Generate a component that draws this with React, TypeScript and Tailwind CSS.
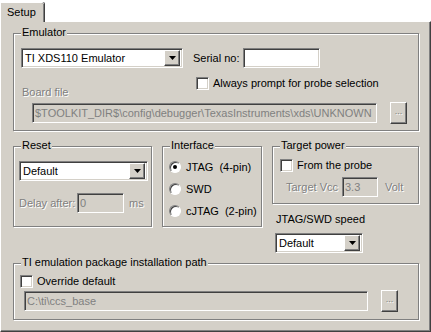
import type { ReactNode } from "react";

const sunken =
  "border border-t-[#808080] border-l-[#808080] border-b-white border-r-white shadow-[inset_1px_1px_0_#404040,inset_-1px_-1px_0_#d4d0c8]";
const raised =
  "border border-t-white border-l-white border-b-[#404040] border-r-[#404040] shadow-[inset_-1px_-1px_0_#808080] bg-[#d4d0c8]";
const dim = "text-[#808080] [text-shadow:1px_1px_0_#fff]";

function Group({ label, className, children }: { label: string; className: string; children: ReactNode }) {
  return (
    <div
      className={`relative border border-[#808080] shadow-[inset_1px_1px_0_#fff,1px_1px_0_#fff] ${className}`}
    >
      <span className="absolute -top-[8px] left-[7px] bg-[#d4d0c8] px-[1px] leading-[13px] text-black">
        {label}
      </span>
      {children}
    </div>
  );
}

function Arrow() {
  return (
    <svg width="7" height="4" viewBox="0 0 7 4">
      <path d="M0 0h7L3.5 4z" fill="#000" />
    </svg>
  );
}

function Combo({ text, width }: { text: string; width: string }) {
  return (
    <div className={`${sunken} ${width} flex h-[20px] items-center bg-white p-[2px]`}>
      <span className="flex-1 pl-[1px] leading-[13px]">{text}</span>
      <div className={`${raised} flex h-[16px] w-[16px] items-center justify-center`}>
        <Arrow />
      </div>
    </div>
  );
}

function Field({ text, width, disabled }: { text: string; width: string; disabled?: boolean }) {
  return (
    <div
      className={`${sunken} ${width} flex h-[20px] items-center overflow-hidden whitespace-nowrap px-[2px] ${
        disabled ? "bg-[#d4d0c8] text-[#808080]" : "bg-white"
      }`}
    >
      {text}
    </div>
  );
}

function Check() {
  return <div className={`${sunken} h-[13px] w-[13px] shrink-0 bg-white`} />;
}

function Radio({ on, label }: { on?: boolean; label: string }) {
  return (
    <div className="flex h-[12px] items-center">
      <div className="flex h-[12px] w-[12px] items-center justify-center rounded-full border border-t-[#808080] border-l-[#808080] border-b-white border-r-white bg-white shadow-[inset_1px_1px_0_#404040]">
        {on && <div className="h-[4px] w-[4px] rounded-full bg-black" />}
      </div>
      <span className="ml-[5px] whitespace-pre">{label}</span>
    </div>
  );
}

function Dots() {
  return (
    <div className={`${raised} flex h-[22px] w-[17px] items-center justify-center pb-[3px] text-[9px] ${dim}`}>
      ...
    </div>
  );
}

export default function App() {
  return (
    <div className="h-[332px] w-[431px] bg-white text-[11px] leading-[13px] text-black [font-family:'Liberation_Sans',Arial,sans-serif]">
      <div className="flex h-[21px] items-end">
        <div className="relative z-10 -mb-px flex h-[20px] w-[44px] items-center rounded-tr-[2px] border-l border-t border-white bg-[#d4d0c8] pl-[6px] shadow-[inset_-1px_0_0_#808080,1px_0_0_#404040]">
          Setup
        </div>
      </div>

      <div className="h-[311px] border-l border-t border-white border-r border-b border-r-[#404040] border-b-[#404040] bg-[#d4d0c8] pl-[12px] pt-[11px] shadow-[inset_-1px_-1px_0_#808080]">
        <Group label="Emulator" className="h-[98px] w-[406px] pl-[7px] pt-[14px]">
          <div className="flex h-[20px] items-center">
            <Combo text="TI XDS110 Emulator" width="w-[162px]" />
            <span className="ml-[10px] w-[50px]">Serial no:</span>
            <Field text="" width="w-[77px]" />
          </div>
          <div className="mt-[9px] flex items-start">
            <div className="w-[175px] pl-[1px] pt-[9px]">
              <span className={dim}>Board file</span>
            </div>
            <div className="flex items-center">
              <Check />
              <span className="ml-[4px]">Always prompt for probe selection</span>
            </div>
          </div>
          <div className="mt-[4px] flex items-start">
            <div className="ml-[11px]">
              <Field text="$TOOLKIT_DIR$\config\debugger\TexasInstruments\xds\UNKNOWN" width="w-[345px]" disabled />
            </div>
            <div className="-mt-px ml-[13px]">
              <Dots />
            </div>
          </div>
        </Group>

        <div className="mt-[15px] flex items-start">
          <Group label="Reset" className="h-[81px] w-[139px] pl-[5px] pt-[14px]">
            <Combo text="Default" width="w-[129px]" />
            <div className="mt-[12px] flex items-center">
              <span className={`w-[58px] ${dim}`}>Delay after:</span>
              <Field text="0" width="w-[47px]" disabled />
              <span className={`ml-[5px] ${dim}`}>ms</span>
            </div>
          </Group>

          <Group label="Interface" className="ml-[10px] flex h-[81px] w-[100px] flex-col gap-[10px] pl-[6px] pt-[14px]">
            <Radio on label="JTAG  (4-pin)" />
            <Radio label="SWD" />
            <Radio label="cJTAG  (2-pin)" />
          </Group>

          <div className="ml-[10px] flex w-[147px] flex-col">
            <Group label="Target power" className="h-[58px] pl-[7px] pt-[12px]">
              <div className="flex items-center">
                <Check />
                <span className="ml-[4px]">From the probe</span>
              </div>
              <div className="mt-[5px] flex items-center pl-[6px]">
                <span className={`w-[56px] ${dim}`}>Target Vcc</span>
                <Field text="3.3" width="w-[36px]" disabled />
                <span className={`ml-[7px] ${dim}`}>Volt</span>
              </div>
            </Group>
            <span className="ml-[4px] mt-[9px]">JTAG/SWD speed</span>
            <div className="ml-[3px] mt-[7px]">
              <Combo text="Default" width="w-[88px]" />
            </div>
          </div>
        </div>

        <Group label="TI emulation package installation path" className="mt-[10px] h-[57px] w-[406px] pl-[6px] pt-[11px]">
          <div className="flex items-center">
            <Check />
            <span className="ml-[4px]">Override default</span>
          </div>
          <div className="mt-[2px] flex items-start">
            <div className="ml-[4px] mt-px">
              <Field text="C:\ti\ccs_base" width="w-[344px]" disabled />
            </div>
            <div className="ml-[13px]">
              <Dots />
            </div>
          </div>
        </Group>
      </div>
    </div>
  );
}
